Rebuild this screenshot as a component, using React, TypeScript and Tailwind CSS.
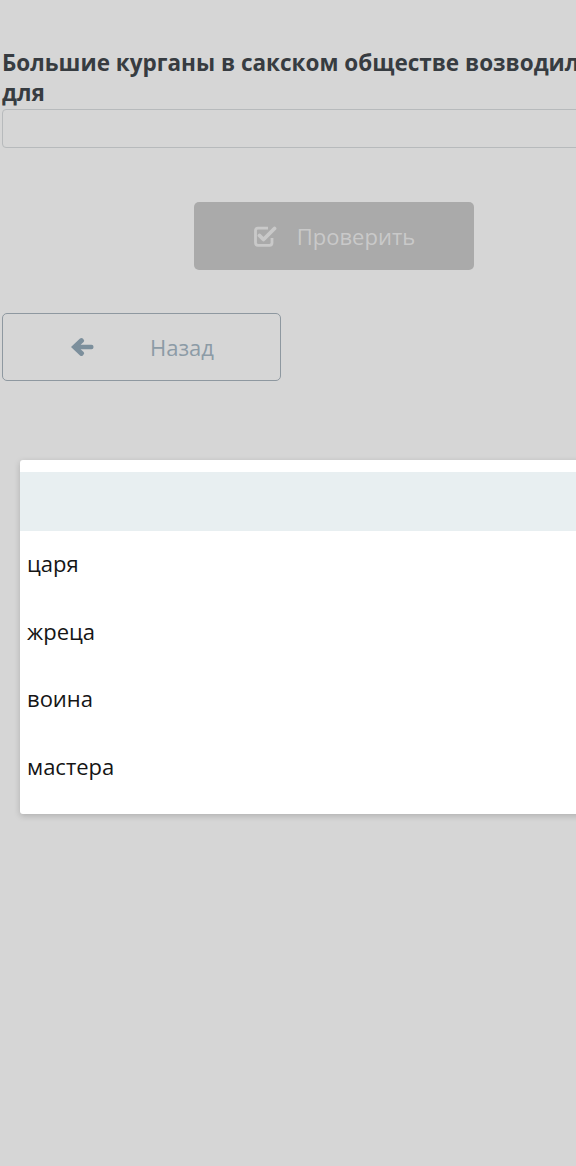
import React from "react";

const options = ["царя", "жреца", "воина", "мастера"];

const CheckSquare = () => (
  <svg viewBox="0 0 24 22" className="h-[22px] w-[24px]" fill="none" stroke="#c9c9c9">
    <path d="M15 3.2 H5 Q2.5 3.2 2.5 5.7 V17.8 Q2.5 20.3 5 20.3 H16.5 Q19 20.3 19 17.8 V13" strokeWidth="2.8" />
    <path d="M6.5 10.5 L10.5 14.5 L21.5 3.5" strokeWidth="3.8" strokeLinecap="round" strokeLinejoin="round" />
  </svg>
);

const ArrowLeft = () => (
  <svg viewBox="0 0 24 20" className="ml-[67px] h-[20px] w-[24px]" fill="#7c8f9c">
    <path d="M1 10 L10 1.5 Q11.5 0.3 12.8 1.6 L13.6 2.4 Q14.8 3.7 13.6 5 L10.6 7.8 L21.5 7.8 Q23.5 7.8 23.5 9.8 L23.5 10.2 Q23.5 12.2 21.5 12.2 L10.6 12.2 L13.6 15 Q14.8 16.3 13.6 17.6 L12.8 18.4 Q11.5 19.7 10 18.5 Z" />
  </svg>
);

const App = () => {
  return (
    <div
      className="relative w-[576px] h-[1166px] overflow-hidden bg-[#d6d6d6]"
      style={{ fontFamily: '"Open Sans", "Noto Sans", sans-serif' }}
    >
      <div className="w-[620px] pl-[2px] pt-[48px]">
        <h2 className="text-[22.5px] leading-[30px] font-bold text-[#373c41]">
          Большие курганы в сакском обществе возводили для
        </h2>
        <div className="mt-[1px] h-[39px] w-[640px] rounded-[4px] border border-[#b7babc]" />

        <div className="mt-[54px] flex justify-start pl-[192px]">
          <button className="flex h-[68px] w-[280px] items-center justify-center gap-[20px] rounded-[5px] bg-[#aaaaaa] text-[22px] text-[#c9c9c9]">
            <CheckSquare />
            <span>Проверить</span>
          </button>
        </div>

        <button className="mt-[43px] flex h-[68px] w-[279px] items-center rounded-[5px] border border-[#8e98a0] text-[22px] text-[#8c9ba6]">
          <ArrowLeft />
          <span className="ml-[56px]">Назад</span>
        </button>
      </div>

      <div className="absolute left-[20px] top-[460px] w-[600px] rounded-[3px] bg-white pt-[12px] pb-[14px] shadow-[0_2px_6px_rgba(0,0,0,0.18)]">
        <div className="h-[59px] bg-[#e8eff1]" />
        <ul className="-mt-[1px]">
          {options.map((o) => (
            <li
              key={o}
              className="flex h-[67.5px] items-center pl-[7px] text-[22px] text-[#151515]"
            >
              {o}
            </li>
          ))}
        </ul>
      </div>
    </div>
  );
};

export default App;
